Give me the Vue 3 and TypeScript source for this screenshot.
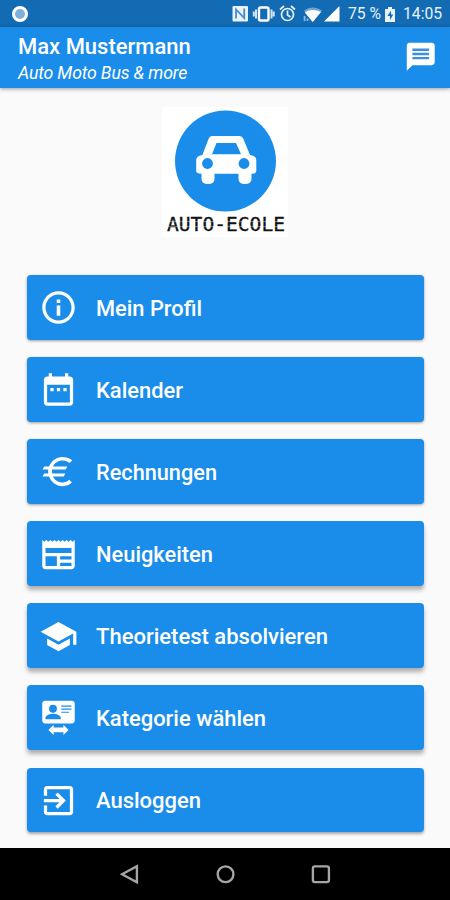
<script setup lang="ts">
interface MenuItem {
  label: string
  width: number
  shadow: 'low' | 'mid' | 'high'
  path: string
}

const items: MenuItem[] = [
  { label: 'Mein Profil', width: 106, shadow: 'low', path: 'M10.9 7h2.2v2.2h-2.2zm0 3.8h2.2v6.2h-2.2zM12 2C6.48 2 2 6.48 2 12s4.48 10 10 10 10-4.48 10-10S17.52 2 12 2zm0 18c-4.41 0-8-3.59-8-8s3.59-8 8-8 8 3.59 8 8-3.59 8-8 8z' },
  { label: 'Kalender', width: 87, shadow: 'low', path: 'M9 11H7v2h2v-2zm4 0h-2v2h2v-2zm4 0h-2v2h2v-2zm2-7h-1V2h-2v2H8V2H6v2H5c-1.11 0-1.99.9-1.99 2L3 20c0 1.1.89 2 2 2h14c1.1 0 2-.9 2-2V6c0-1.1-.9-2-2-2zm0 16H5V9h14v11z' },
  { label: 'Rechnungen', width: 121, shadow: 'low', path: 'M14.5 18.800c-2.700 0-4.900-1.500-5.900-3.700h6.600l1-1.900H8.100a8 8 0 0 1 0-2.400h8.300l1-1.900H8.600C9.600 6.700 11.800 5.200 14.500 5.200c1.700 0 3.200.6 4.300 1.600L20.500 5.100C18.900 3.800 16.900 3 14.500 3 10.700 3 7.500 5.400 6.200 8.900H3.200L2.200 10.800H5.700a10 10 0 0 0 0 2.400H3.200L2.200 15.100H6.200C7.500 18.600 10.700 21 14.500 21c2.300 0 4.200-.8 5.800-2.200L18.600 17.100C17.500 18.200 16.100 18.800 14.500 18.800z' },
  { label: 'Neuigkeiten', width: 117, shadow: 'high', path: 'M22 3l-1.25 1.2L19.5 3l-1.25 1.2L17 3l-1.25 1.2L14.5 3l-1.25 1.2L12 3l-1.25 1.2L9.5 3 8.25 4.2 7 3 5.75 4.2 4.5 3 3.25 4.2 2 3v16c0 1.1.9 2 2 2h16c1.1 0 2-.9 2-2V3zM11 19H4v-6h7v6zm9 0h-7v-2h7v2zm0-4h-7v-2h7v2zm0-4H4V8h16v3z' },
  { label: 'Theorietest absolvieren', width: 232, shadow: 'high', path: 'M5 13.18v4L12 21l7-3.82v-4L12 17l-7-3.82zM12 3 1 9l11 6 9-4.91V17h2V9L12 3z' },
  { label: 'Kategorie wählen', width: 170, shadow: 'high', path: 'M20.2 1H3.8C2.7 1 2 1.8 2 2.8v10.4C2 14.3 2.8 15 3.8 15h16.4c1 0 1.8-.8 1.8-1.8V2.8C22 1.8 21.2 1 20.2 1zM8.6 3.6a2.4 2.4 0 1 1 0 4.8 2.4 2.4 0 0 1 0-4.8zM13.4 12.5H4v-1c0-1.6 3-2.5 4.7-2.5s4.7.9 4.7 2.5v1zM20 6.6h-6.3v-.7H20v.7zm0-1.9h-6.3V4H20v.7zm-1.6 3.8h-4.7v-.7h4.7v.7zM9 15.900v1.700h6v-1.700l3.200 3.100-3.200 3.100v-1.700H9v1.700l-3.200-3.100z' },
  { label: 'Ausloggen', width: 105, shadow: 'mid', path: 'M10.09 15.59 11.5 17l5-5-5-5-1.41 1.41L12.67 11H3v2h9.67l-2.58 2.59zM19 3H5c-1.11 0-2 .9-2 2v4h2V5h14v14H5v-4H3v4c0 1.1.89 2 2 2h14c1.1 0 2-.9 2-2V5c0-1.1-.9-2-2-2z' },
]
</script>

<template>
  <div class="screen">
    <div class="status">
      <span class="dot"></span>
      <svg class="tray" viewBox="0 0 112 27">
        <rect x="4.5" y="6" width="15.5" height="15.5" rx="1" fill="#e8f2fa" />
        <path d="M8 18.5V9.5l8.2 8.5V8.5" fill="none" stroke="#4a8dc6" stroke-width="1.8" />
        <rect x="31" y="7.5" width="9.5" height="13" rx="1.5" fill="none" stroke="#fff" stroke-width="2.4" />
        <path d="M28 9.5v9M43.5 9.5v9M25.8 11.5v5M45.7 11.5v5" stroke="#d3e4f2" stroke-width="2" />
        <g fill="none" stroke="#e8f2fa" stroke-width="1.7">
          <circle cx="59.5" cy="14.5" r="6" />
          <path d="M59.5 10.5v4.5l3 2M52 9.5l4-3.5M67 9.5 63 6" />
        </g>
        <path d="M76 10.5Q84.5 4.5 94 10.5L84.7 22z" fill="#6fa6d2" />
        <path d="M76.8 12.5Q84 8 93 12L84.7 22z" fill="#fff" />
        <path d="M76.6 16v5M79.5 18.5v2.5" stroke="#8db9dc" stroke-width="1.8" />
        <path d="M96 21.5 111.5 6v15.500z" fill="#fff" />
      </svg>
      <span class="percent">75 %</span>
      <svg class="battery" viewBox="0 0 12 18">
        <path d="M4 2h4v2h3v13H1V4h3z" fill="#e8f2fa" />
        <path d="M7 5.5 3.5 11H6v4l3.3-5.5H7z" fill="#126bb3" />
      </svg>
      <span class="clock">14:05</span>
    </div>

    <header class="appbar">
      <div class="titles">
        <h1>Max Mustermann</h1>
        <p>Auto Moto Bus &amp; more</p>
      </div>
      <svg class="chat" viewBox="0 0 24 24">
        <path d="M20 2H4c-1.1 0-1.99.9-1.99 2L2 22l4-4h14c1.1 0 2-.9 2-2V4c0-1.1-.9-2-2-2z" fill="#fff" />
        <path d="M6 7h12M6 10h12M6 13h12" stroke="#3b91df" stroke-width="1.7" />
      </svg>
    </header>

    <main>
      <div class="logo">
        <svg class="badge" viewBox="0 0 102 102">
          <circle cx="51.5" cy="51" r="50.5" fill="#198de9" />
          <path d="M38 26h27.5q2.8 0 3.8 2.8l6.7 16.2q6.3 1 6.3 5v11q0 2.7-4.8 2.7v5q0 5.3-6.5 5.3t-6.5-5.3v-5H40.5v5q0 5.3-6.5 5.3t-6.5-5.3v-5q-5.3 0-5.3-2.7V50q0-4 6.2-5l6.2-16.2Q35.5 26 38 26z" fill="#fff" />
          <path d="M42.5 33h19.5l5 11.2H38z" fill="#198de9" />
          <circle cx="33.5" cy="53.5" r="5.4" fill="#198de9" />
          <circle cx="70" cy="53.5" r="5.4" fill="#198de9" />
        </svg>
        <svg class="wordmark" viewBox="0 0 126 22">
          <text x="5" y="17" textLength="118" lengthAdjust="spacingAndGlyphs">AUTO-ECOLE</text>
          <path d="M4 7.6h118M4 12.6h118" />
        </svg>
      </div>

      <nav class="menu">
        <button v-for="item in items" :key="item.label" type="button" class="card" :class="item.shadow">
          <svg class="icon" viewBox="0 0 24 24"><path :d="item.path" fill="#fff" fill-rule="evenodd" /></svg>
          <svg class="label" viewBox="0 0 300 32">
            <text x="0" y="23.5" :textLength="item.width" lengthAdjust="spacingAndGlyphs">{{ item.label }}</text>
          </svg>
        </button>
      </nav>
    </main>

    <footer class="navbar">
      <svg viewBox="0 0 24 24"><path d="M19.5 4.2v15.6L5 12z" /></svg>
      <svg viewBox="0 0 24 24"><circle cx="12.3" cy="12" r="7.7" /></svg>
      <svg viewBox="0 0 24 24"><rect x="4.8" y="4.3" width="15.7" height="15.4" rx="2" /></svg>
    </footer>
  </div>
</template>

<style>
body {
  margin: 0;
}
</style>

<style scoped>
.screen {
  width: 450px;
  height: 900px;
  display: flex;
  flex-direction: column;
  overflow: hidden;
  background: #fafafa;
  font-family: Roboto, sans-serif;
}
svg {
  display: block;
  flex: none;
}
.status {
  height: 27px;
  flex: none;
  display: flex;
  align-items: center;
  background: #126bb3;
  color: #e8f2fa;
  font-size: 15.7px;
  line-height: 28px;
}
.dot {
  width: 10px;
  height: 10px;
  margin-left: 11.5px;
  border: 3px solid #fff;
  border-radius: 50%;
  background: #80b0d9;
}
.tray {
  width: 112px;
  height: 27px;
  margin-left: 200.5px;
}
.percent {
  width: 36px;
  margin-left: 8px;
  white-space: nowrap;
}
.battery {
  width: 12px;
  height: 18px;
}
.clock {
  margin-left: 7px;
}
.appbar {
  height: 60.5px;
  flex: none;
  box-sizing: border-box;
  padding: 0 13px 0 18px;
  display: flex;
  justify-content: space-between;
  background: #198de9;
  color: #fff;
  box-shadow: 0 1px 4px rgba(0, 0, 0, 0.38);
}
.titles h1 {
  margin: 7px 0 0;
  font-size: 22px;
  font-weight: 500;
  line-height: 26px;
}
.titles p {
  margin: 2px 0 0;
  font-size: 17.7px;
  font-style: italic;
  line-height: 22px;
  letter-spacing: -0.16px;
}
.chat {
  width: 33.5px;
  height: 33.5px;
  margin-top: 13px;
}
main {
  flex: 1;
  display: flex;
  flex-direction: column;
  align-items: center;
}
.logo {
  width: 126px;
  height: 130px;
  margin-top: 19.5px;
  padding-top: 3px;
  box-sizing: border-box;
  display: flex;
  flex-direction: column;
  align-items: center;
  background: #fff;
}
.badge {
  width: 102px;
  height: 102px;
}
.wordmark {
  width: 126px;
  height: 22px;
  margin-top: 2px;
}
.wordmark text {
  font-family: "DejaVu Sans Mono", monospace;
  font-size: 19px;
  fill: #111;
  stroke: #111;
  stroke-width: 0.3;
}
.wordmark path {
  stroke: #fff;
  stroke-opacity: 0.5;
  stroke-width: 0.8;
}
.menu {
  width: 397px;
  margin-top: 38px;
  display: flex;
  flex-direction: column;
  gap: 17.6px;
}
.card {
  height: 64.5px;
  box-sizing: border-box;
  margin: 0;
  padding: 1px 0 0 12.5px;
  border: 0;
  border-radius: 4px;
  display: flex;
  align-items: center;
  gap: 17.5px;
  background: #198de9;
}
.low {
  box-shadow: 0 1px 3px rgba(0, 0, 0, 0.38);
}
.mid {
  box-shadow: 0 2px 3px rgba(0, 0, 0, 0.34);
}
.high {
  box-shadow: 0 4px 4px rgba(0, 0, 0, 0.3);
}
.icon {
  width: 39px;
  height: 39px;
}
.label {
  width: 300px;
  height: 32px;
}
.label text {
  font-family: Roboto, sans-serif;
  font-size: 22px;
  font-weight: 500;
  fill: #fff;
}
.navbar {
  height: 52px;
  flex: none;
  display: flex;
  align-items: center;
  justify-content: center;
  gap: 71px;
  background: #000;
}
.navbar svg {
  width: 24.5px;
  height: 24.5px;
  fill: none;
  stroke: #a6a6a6;
  stroke-width: 2.3;
}
</style>
